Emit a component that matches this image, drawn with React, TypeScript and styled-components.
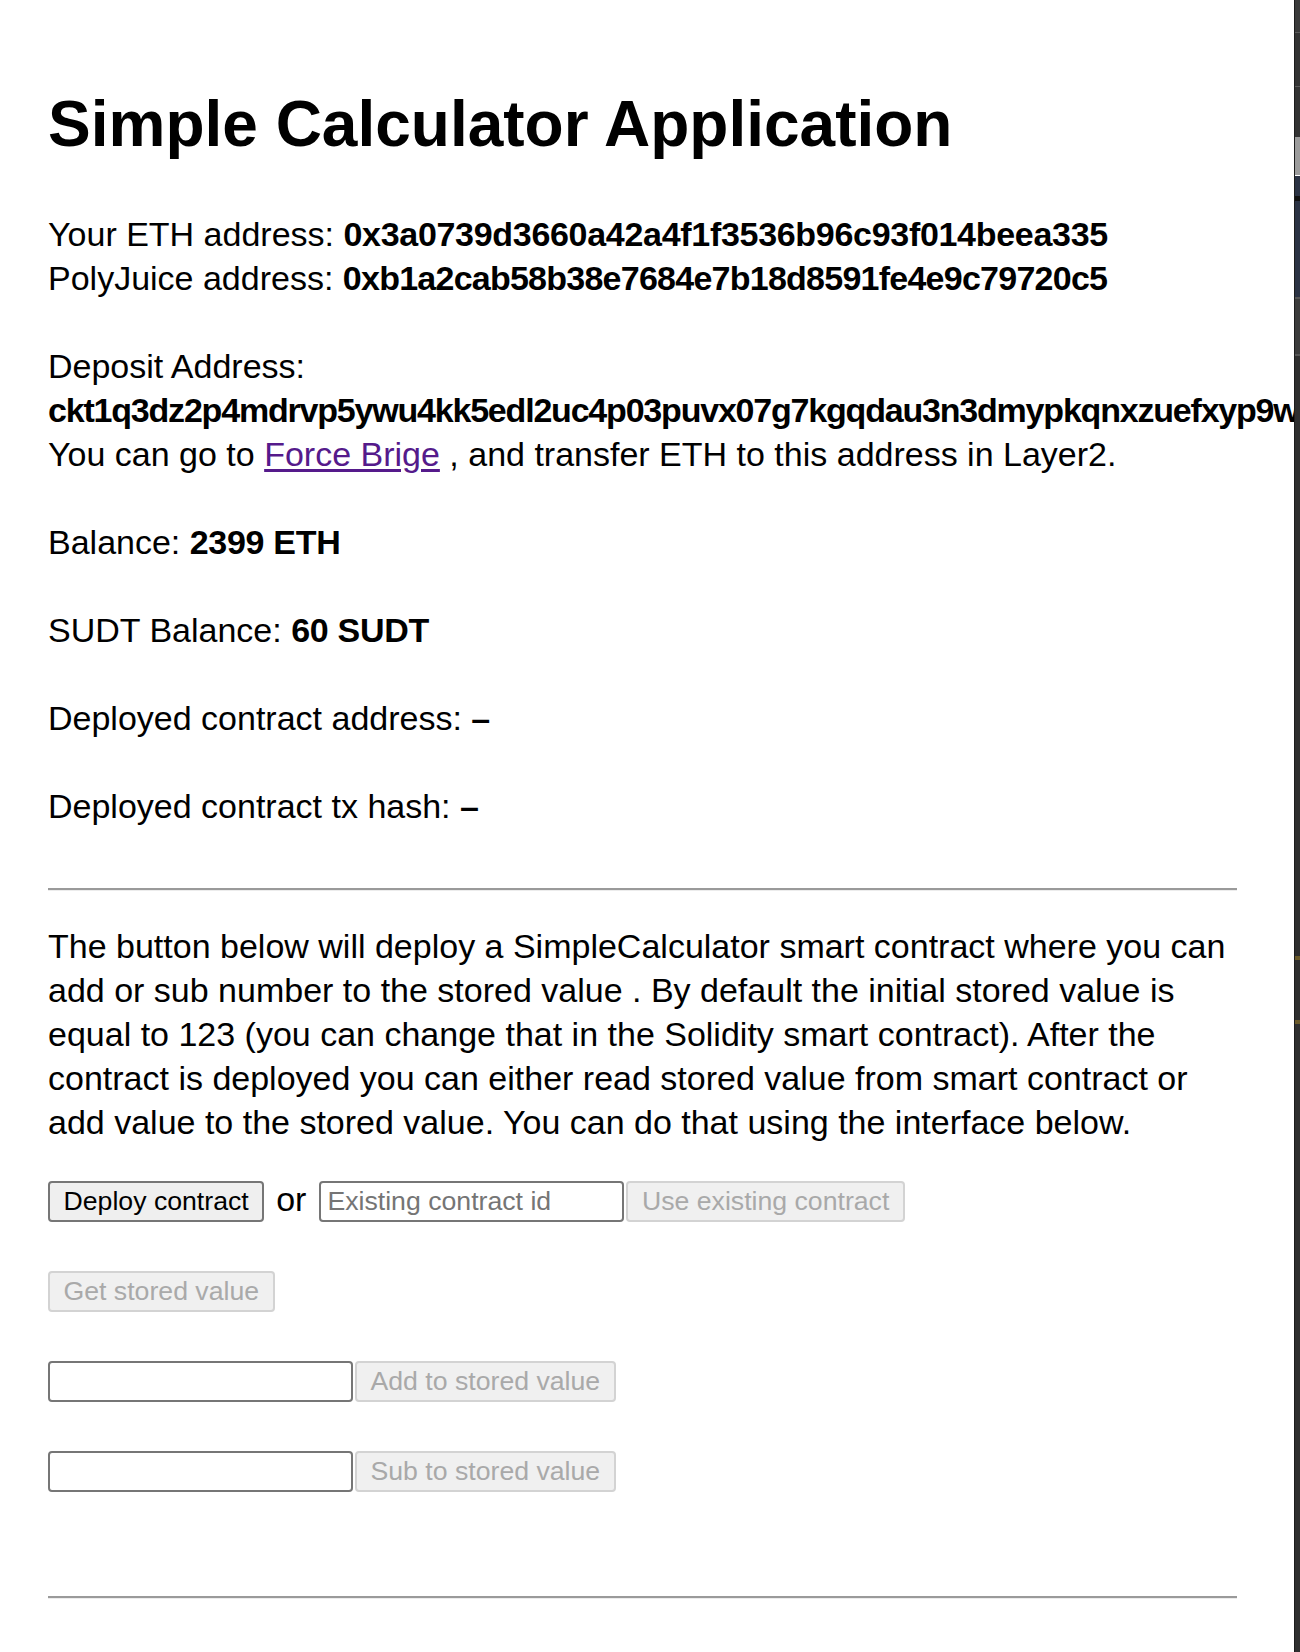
import React from "react";
import styled, { createGlobalStyle } from "styled-components";

const GlobalStyle = createGlobalStyle`
  html, body {
    margin: 0;
    padding: 0;
    background: #ffffff;
  }
  body {
    font-family: "Liberation Sans", Arial, sans-serif;
    color: #000000;
  }
`;

const Page = styled.div`
  display: flex;
  min-height: 100vh;
  width: 100%;
`;

const Main = styled.main`
  flex: 1;
  min-width: 0;
  overflow: hidden;
  padding: 87px 0 0 48px;
`;

const Content = styled.div`
  width: 1189px;
`;

const Title = styled.h1`
  margin: 0;
  font: 700 64px/74px "Liberation Sans", Arial, sans-serif;
  color: #000;
`;

const Info = styled.section`
  margin-top: 51px;
  font-size: 34px;
  line-height: 44px;
  display: flex;
  flex-direction: column;
  gap: 44px;
`;

const Group = styled.div`
  display: flex;
  flex-direction: column;
`;

const Line = styled.p`
  margin: 0;
  height: 44px;
  white-space: nowrap;
`;

const Strong = styled.b<{ $spacing?: number }>`
  font-weight: 700;
  letter-spacing: ${(p) => p.$spacing ?? -0.3}px;
`;

const Link = styled.a`
  color: #551a8b;
  text-decoration: underline;
  text-underline-offset: 3px;
`;

const Divider = styled.hr<{ $top: number }>`
  margin: ${(p) => p.$top}px 0 0;
  height: 0;
  border: 0;
  border-top: 2px solid #9a9a9a;
  border-bottom: 1px solid #ececec;
`;

const Description = styled.p`
  margin: 33px 0 0;
  font-size: 34px;
  line-height: 44px;
`;

const Controls = styled.div`
  margin-top: 37px;
  display: flex;
  flex-direction: column;
  gap: 49px;
`;

const Row = styled.div`
  display: flex;
  align-items: center;
  height: 41px;
`;

const Button = styled.button<{ $attached?: boolean }>`
  box-sizing: border-box;
  height: 41px;
  margin: 0 0 0 ${(p) => (p.$attached ? 2 : 0)}px;
  padding: 0 13.5px;
  border-radius: 4px;
  border: 2px solid #767676;
  background: #efefef;
  color: #000;
  font: 400 26.67px/1 "Liberation Sans", Arial, sans-serif;
  white-space: nowrap;

  &:disabled {
    border-color: #d3d3d3;
    background: #f0f0f0;
    color: #a9a9a9;
  }
`;

const Or = styled.span`
  font-size: 34px;
  line-height: 44px;
  margin: 0 13px 0 12px;
  position: relative;
  top: -3px;
`;

const Input = styled.input`
  box-sizing: border-box;
  width: 305px;
  height: 41px;
  margin: 0;
  padding: 0 6px;
  border: 2px solid #767676;
  border-radius: 4px;
  background: #fff;
  font: 400 26.67px/1 "Liberation Sans", Arial, sans-serif;
  color: #000;

  &::placeholder {
    color: #757575;
  }
`;

const Strip = styled.aside`
  width: 6px;
  flex: none;
  display: flex;
  flex-direction: column;
  background: #2f2f2f;
  border-left: 1px solid #1c1c1c;
  box-sizing: border-box;
`;

const Segment = styled.div<{ $h: number; $c: string }>`
  height: ${(p) => p.$h}px;
  background: ${(p) => p.$c};
  flex: none;
`;

const segments: Array<[number, string]> = [
  [32, "#3a3a3a"],
  [1, "#5a5a5a"],
  [53, "#333333"],
  [1, "#5a5a5a"],
  [50, "#333333"],
  [38, "#9c9c9c"],
  [1, "#ffffff"],
  [20, "#2b3344"],
  [5, "#111111"],
  [96, "#2b3344"],
  [2, "#555555"],
  [55, "#3b3b3b"],
  [2, "#555555"],
  [600, "#2e2e2e"],
  [4, "#6a5a2a"],
  [60, "#2e2e2e"],
  [4, "#6a5a2a"],
];

const DEPOSIT =
  "ckt1q3dz2p4mdrvp5ywu4kk5edl2uc4p03puvx07g7kgqdau3n3dmypkqnxzuefxyp9wdqtpvfn2z6wjy5vx4dpkv6t5yjh9t5v3tzhqqgqqqq";

export default function App() {
  return (
    <>
      <GlobalStyle />
      <Page>
        <Main>
          <Content>
            <Title>Simple Calculator Application</Title>
            <Info>
              <Group>
                <Line>
                  Your ETH address: <Strong>0x3a0739d3660a42a4f1f3536b96c93f014beea335</Strong>
                </Line>
                <Line>
                  PolyJuice address: <Strong $spacing={-0.75}>0xb1a2cab58b38e7684e7b18d8591fe4e9c79720c5</Strong>
                </Line>
              </Group>
              <Group>
                <Line>Deposit Address:</Line>
                <Line>
                  <Strong $spacing={-1.2}>{DEPOSIT}</Strong>
                </Line>
                <Line>
                  You can go to <Link href="#">Force Brige</Link> , and transfer ETH to this address in Layer2.
                </Line>
              </Group>
              <Group>
                <Line>
                  Balance: <Strong>2399 ETH</Strong>
                </Line>
              </Group>
              <Group>
                <Line>
                  SUDT Balance: <Strong>60 SUDT</Strong>
                </Line>
              </Group>
              <Group>
                <Line>
                  Deployed contract address: <Strong>–</Strong>
                </Line>
              </Group>
              <Group>
                <Line>
                  Deployed contract tx hash: <Strong>–</Strong>
                </Line>
              </Group>
            </Info>
            <Divider $top={60} />
            <Description>
              The button below will deploy a SimpleCalculator smart contract where you can add or sub number to the
              stored value . By default the initial stored value is equal to 123 (you can change that in the Solidity
              smart contract). After the contract is deployed you can either read stored value from smart contract or
              add value to the stored value. You can do that using the interface below.
            </Description>
            <Controls>
              <Row>
                <Button>Deploy contract</Button>
                <Or>or</Or>
                <Input placeholder="Existing contract id" />
                <Button $attached disabled>
                  Use existing contract
                </Button>
              </Row>
              <Row>
                <Button disabled>Get stored value</Button>
              </Row>
              <Row>
                <Input />
                <Button $attached disabled>
                  Add to stored value
                </Button>
              </Row>
              <Row>
                <Input />
                <Button $attached disabled>
                  Sub to stored value
                </Button>
              </Row>
            </Controls>
            <Divider $top={104} />
          </Content>
        </Main>
        <Strip>
          {segments.map(([h, c], i) => (
            <Segment key={i} $h={h} $c={c} />
          ))}
        </Strip>
      </Page>
    </>
  );
}
